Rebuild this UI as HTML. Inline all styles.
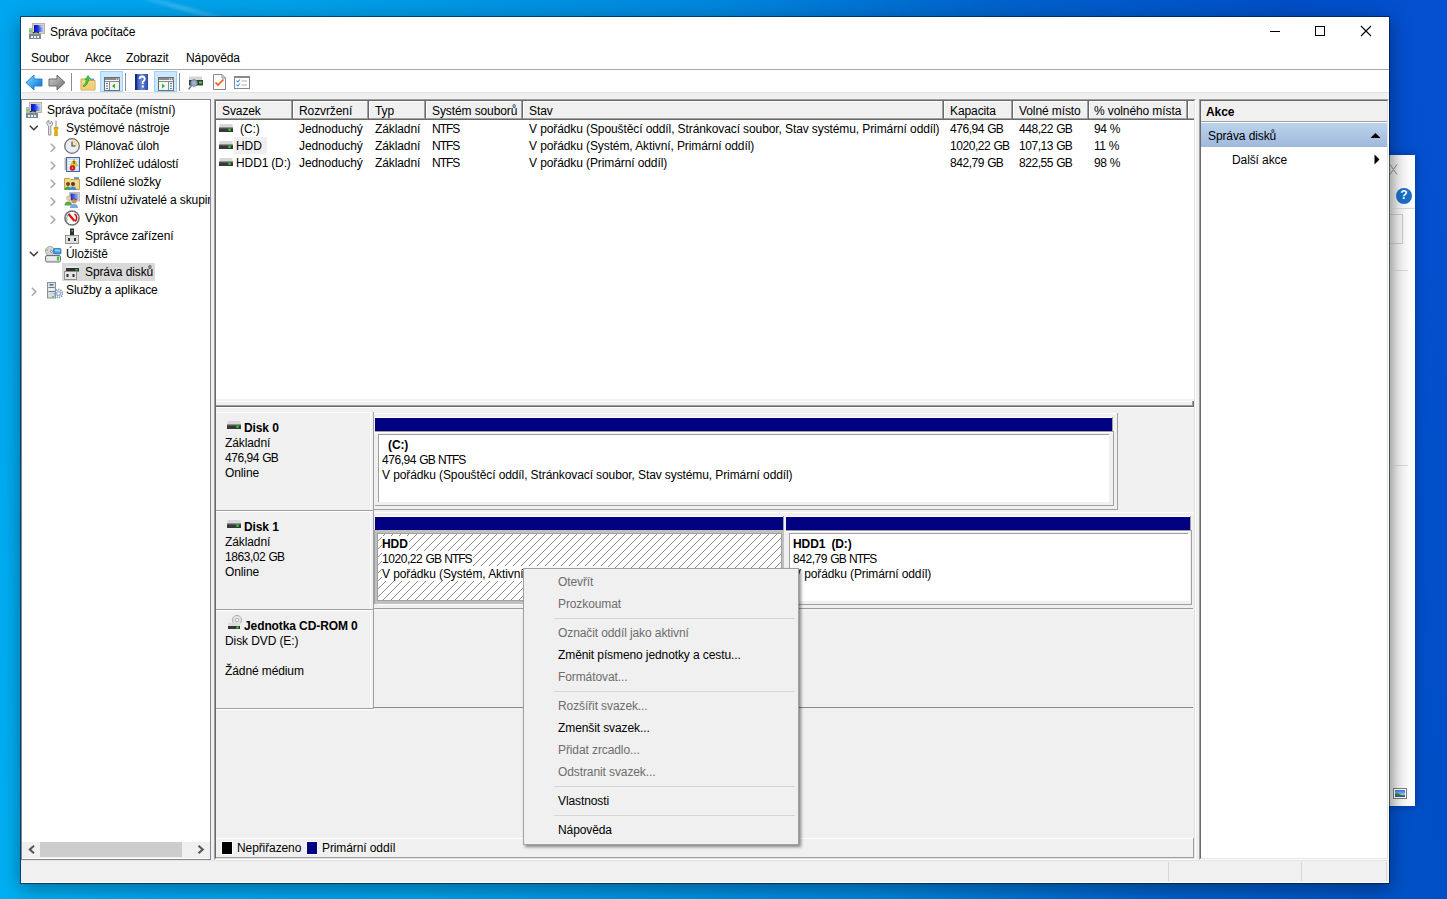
<!DOCTYPE html>
<html><head><meta charset="utf-8">
<style>
*{box-sizing:border-box;margin:0;padding:0}
html,body{width:1447px;height:899px;overflow:hidden}
body{position:relative;font-family:"Liberation Sans",sans-serif;font-size:12px;color:#000;
background:linear-gradient(80deg,#00b0f2 0px,#00a6f0 160px,#00a0e8 443px,#0086dc 860px,#0062cc 1137px,#004ec6 1430px,#0550d2 1581px)}
.a{position:absolute}
.t{position:absolute;white-space:nowrap;line-height:17px;height:17px;font-size:12px;letter-spacing:-0.1px}
.b{font-weight:bold}
.n{letter-spacing:-0.45px}
.gb{letter-spacing:-0.9px}
.nt{letter-spacing:-1px}
.dis{color:#6d6d6d}
svg{position:absolute;overflow:visible}
</style></head><body>
<!-- desktop shading -->


<div class="a" style="left:110px;top:-14px;width:150px;height:5px;background:linear-gradient(90deg,rgba(255,255,255,0),rgba(170,225,255,0.28),rgba(255,255,255,0));transform:rotate(15deg);transform-origin:0 0;filter:blur(1.2px)"></div>
<!-- background window (behind) -->
<div class="a" style="left:1300px;top:155px;width:115px;height:651px;background:#fff;box-shadow:0 0 8px rgba(0,0,40,0.35)">
  <div class="a" style="left:89px;top:0;width:26px;height:651px;background:linear-gradient(90deg,#d4d4d4,#f2f2f2 40%,#fdfdfd 80%)"></div>
  <svg style="left:90px;top:9px" width="8" height="11"><path d="M0 0.5 L7 10.5 M7 0.5 L0 10.5" stroke="#8a8a8a" stroke-width="1"/></svg>
  <div class="a" style="left:96px;top:33px;width:16px;height:16px;border-radius:50%;background:#1a6fc4"></div>
  <div class="a" style="left:96px;top:32px;width:16px;height:16px;color:#fff;font-weight:bold;font-size:12px;text-align:center;line-height:17px">?</div>
  <div class="a" style="left:90px;top:53px;width:25px;height:1px;background:#dadada"></div>
  <div class="a" style="left:80px;top:59px;width:23px;height:30px;border:1px solid #c8c8c8"></div>
  <div class="a" style="left:90px;top:115px;width:18px;height:1px;background:#d8d8d8"></div>
  <div class="a" style="left:90px;top:310px;width:18px;height:1px;background:#d8d8d8"></div>
  <svg style="left:93px;top:633px" width="14" height="11"><rect x="0.5" y="0.5" width="13" height="10" fill="#fff" stroke="#7a7a7a"/>
<defs><linearGradient id="sky" x1="0" y1="0" x2="0" y2="1"><stop offset="0" stop-color="#2a78e0"/><stop offset="1" stop-color="#d8ecf8"/></linearGradient></defs>
<rect x="2" y="2" width="10" height="7" fill="url(#sky)"/><path d="M2 5.5 Q5 4.5 7 6.5 Q9 7.5 12 7 L12 9 L2 9 Z" fill="#3a7a3a"/><rect x="2" y="8" width="10" height="1" fill="#2a5aa0"/></svg>
</div>

<!-- main window -->
<div class="a" id="win" style="left:20px;top:16px;width:1370px;height:868px;background:#f0f0f0;background-clip:padding-box;border:1px solid rgba(0,18,36,0.58);box-shadow:0 5px 18px rgba(0,0,0,0.36)"></div>
<div class="a" style="left:21px;top:17px;width:1368px;height:75px;background:#fff"></div>
<div class="a" style="left:21px;top:69px;width:1368px;height:1px;background:#a9a9a9"></div>
<div class="a" style="left:21px;top:92px;width:1368px;height:1px;background:#e3e3e3"></div>

<!-- title -->
<div class="t" style="left:50px;top:24px">Správa počítače</div>
<!-- window controls -->
<div class="a" style="left:1270px;top:31px;width:10px;height:1px;background:#000"></div>
<div class="a" style="left:1315px;top:26px;width:10px;height:10px;border:1px solid #000"></div>
<svg style="left:1361px;top:26px" width="10" height="10"><path d="M0 0 L10 10 M10 0 L0 10" stroke="#000" stroke-width="1.1"/></svg>

<!-- menu -->
<div class="t" style="left:31px;top:50px">Soubor</div>
<div class="t" style="left:85px;top:50px">Akce</div>
<div class="t" style="left:126px;top:50px">Zobrazit</div>
<div class="t" style="left:186px;top:50px">Nápověda</div>


<svg width="0" height="0" style="left:0;top:0"><defs><linearGradient id="scr2" x1="0" y1="0" x2="1" y2="0"><stop offset="0" stop-color="#0010c8"/><stop offset="0.45" stop-color="#2038e0"/><stop offset="1" stop-color="#b0c4f8"/></linearGradient></defs></svg>
<!-- title icon -->
<svg style="left:29px;top:23px" width="16" height="16">
 <rect x="3.5" y="0.5" width="12" height="10" fill="#d8d4c8" stroke="#b8b4a8"/>
 <rect x="5" y="2" width="9" height="7" fill="url(#scr2)"/><path d="M9 2.5 L13.5 2.5 L13.5 5 Z" fill="#e0e8ff" fill-opacity="0.6"/>
 <rect x="0" y="5" width="3" height="6" fill="#bbb"/><rect x="0.5" y="7" width="2" height="2" fill="#4de04d"/>
 <path d="M4 10 Q7 8 10 10" stroke="#222" stroke-width="1.2" fill="none"/>
 <rect x="0" y="11" width="12" height="5" fill="#7a8a94"/><rect x="2" y="13" width="2" height="2" fill="#eee"/><rect x="5" y="13" width="2" height="2" fill="#eee"/><rect x="8" y="13" width="2" height="2" fill="#eee"/>
</svg>

<!-- toolbar -->
<svg style="left:25px;top:74px" width="18" height="17">
 <defs><linearGradient id="gb" x1="0" y1="0" x2="1" y2="1"><stop offset="0" stop-color="#8ad8ff"/><stop offset="0.5" stop-color="#3aa8f0"/><stop offset="1" stop-color="#0060c0"/></linearGradient></defs>
 <path d="M1 8.5 L9 1 L9 5 L17 5 L17 12 L9 12 L9 16 Z" fill="url(#gb)" stroke="#2f82d0" stroke-width="1" stroke-linejoin="round"/>
</svg>
<svg style="left:48px;top:74px" width="18" height="17">
 <defs><linearGradient id="gg" x1="0" y1="0" x2="1" y2="1"><stop offset="0" stop-color="#d0d0d0"/><stop offset="0.5" stop-color="#a0a0a0"/><stop offset="1" stop-color="#686868"/></linearGradient></defs>
 <path d="M17 8.5 L9 1 L9 5 L1 5 L1 12 L9 12 L9 16 Z" fill="url(#gg)" stroke="#6a6a6a" stroke-width="1" stroke-linejoin="round"/>
</svg>
<div class="a" style="left:71px;top:73px;width:1px;height:18px;background:#8e8e8e"></div>
<svg style="left:80px;top:75px" width="16" height="16">
 <path d="M1 4 L6 4 L7 5.5 L15 5.5 L15 15 L1 15 Z" fill="#f6d98a" stroke="#c9a352" stroke-width="1"/>
 <rect x="1.5" y="8" width="13" height="6.5" fill="#f2cf72"/>
 <path d="M3 11 Q6 9 6.5 4.5 L5 5 L8 0.5 L10.5 4 L9 4 Q8.5 9 4 12 Z" fill="#3cc83c" stroke="#2a9a2a" stroke-width="0.6"/>
 <rect x="10" y="3.5" width="4" height="1.5" fill="#5aa0e0"/>
</svg>
<div class="a" style="left:100px;top:71px;width:23px;height:21px;background:#cce8ff;border:1px solid #99d1ff"></div>
<svg style="left:104px;top:77px" width="17" height="14">
 <rect x="0.5" y="0.5" width="15" height="13" fill="#f4f4f4" stroke="#6e6e6e"/>
 <rect x="1" y="1" width="15" height="2" fill="#8a8a8a"/><rect x="12" y="1.5" width="1" height="1" fill="#fff"/><rect x="14" y="1.5" width="1" height="1" fill="#fff"/>
 <line x1="1" y1="4.5" x2="15" y2="4.5" stroke="#8a8a8a"/>
 <line x1="5.5" y1="5" x2="5.5" y2="13" stroke="#8a8a8a"/>
 <rect x="2" y="6" width="2" height="1" fill="#3a7bd0"/><rect x="2" y="8.5" width="2" height="1" fill="#3a7bd0"/><rect x="2" y="11" width="2" height="1" fill="#3a7bd0"/>
 <path d="M8 9 L11 6.5 L11 11.5 Z" fill="#2cb52c"/>
</svg>
<div class="a" style="left:125px;top:73px;width:1px;height:18px;background:#8e8e8e"></div>
<svg style="left:135px;top:74px" width="14" height="16">
 <defs><linearGradient id="hb" x1="0" y1="0" x2="1" y2="0"><stop offset="0" stop-color="#1d3a9c"/><stop offset="0.5" stop-color="#6a86d8"/><stop offset="1" stop-color="#2848b0"/></linearGradient></defs>
 <rect x="0" y="0" width="13" height="16" fill="url(#hb)"/><rect x="0" y="0" width="2" height="16" fill="#142c80"/>
 <path d="M4.5 5 Q4.5 2.5 7 2.5 Q9.8 2.5 9.8 5 Q9.8 6.8 7.8 7.8 L7.8 10" stroke="#fff" stroke-width="1.8" fill="none"/>
 <rect x="6.9" y="11.5" width="1.9" height="2" fill="#fff"/>
</svg>
<div class="a" style="left:154px;top:71px;width:23px;height:21px;background:#cce8ff;border:1px solid #99d1ff"></div>
<svg style="left:158px;top:77px" width="17" height="14">
 <rect x="0.5" y="0.5" width="15" height="13" fill="#f4f4f4" stroke="#6e6e6e"/>
 <rect x="1" y="1" width="15" height="2" fill="#8a8a8a"/><rect x="11" y="1.5" width="1" height="1" fill="#fff"/><rect x="13" y="1.5" width="1" height="1" fill="#fff"/>
 <line x1="1" y1="4.5" x2="15" y2="4.5" stroke="#8a8a8a"/>
 <line x1="10.5" y1="5" x2="10.5" y2="13" stroke="#8a8a8a"/>
 <rect x="12" y="6" width="2" height="1" fill="#3a7bd0"/><rect x="12" y="8.5" width="2" height="1" fill="#3a7bd0"/><rect x="12" y="11" width="2" height="1" fill="#3a7bd0"/>
 <path d="M4 6.5 L7 9 L4 11.5 Z" fill="#2cb52c"/>
</svg>
<div class="a" style="left:179px;top:73px;width:1px;height:18px;background:#8e8e8e"></div>
<svg style="left:188px;top:76px" width="16" height="15">
 <rect x="1" y="0.5" width="13" height="4" fill="#d4d4d4"/>
 <rect x="1" y="4" width="14" height="5" fill="#3c3c3c"/><rect x="11" y="5.5" width="3" height="2" fill="#30e030"/>
 <rect x="1" y="9" width="14" height="1" fill="#a8a8a8"/>
 <circle cx="6" cy="7" r="3.3" fill="#a8c8e0" fill-opacity="0.85" stroke="#6a7a8a" stroke-width="1"/>
 <line x1="3.5" y1="9.5" x2="0.5" y2="13.5" stroke="#6a7a8a" stroke-width="1.4"/>
</svg>
<svg style="left:213px;top:74px" width="13" height="16">
 <path d="M0.5 0.5 L9 0.5 L12.5 4 L12.5 15.5 L0.5 15.5 Z" fill="#fafafa" stroke="#8a8a8a"/>
 <path d="M9 0.5 L9 4 L12.5 4" fill="none" stroke="#8a8a8a"/>
 <path d="M2.5 8.5 L5 11 L10.5 5.5" stroke="#f05a1a" stroke-width="1.6" fill="none"/>
</svg>
<svg style="left:234px;top:76px" width="17" height="13">
 <rect x="0.5" y="0.5" width="15" height="12" fill="#fff" stroke="#8a8a8a"/>
 <rect x="0.5" y="0.5" width="15" height="1.5" fill="#8a8a8a"/>
 <path d="M2.5 4.5 L3.8 6 L6 3.5" stroke="#3a8ae0" stroke-width="1.1" fill="none"/>
 <path d="M2.5 8.5 L3.8 10 L6 7.5" stroke="#3a8ae0" stroke-width="1.1" fill="none"/>
 <line x1="7.5" y1="5" x2="13" y2="5" stroke="#b0b0b0"/><line x1="7.5" y1="9" x2="13" y2="9" stroke="#b0b0b0"/>
</svg>

<!-- panes -->
<!-- tree pane -->
<div class="a" style="left:21px;top:99px;width:190px;height:761px;background:#fff;border:1px solid #828790"></div>
<div class="a" style="left:22px;top:100px;width:188px;height:742px;overflow:hidden">
 <div class="a" style="left:40px;top:163px;width:93px;height:18px;background:#d9d9d9"></div>
 <div class="t" style="left:25px;top:2px">Správa počítače (místní)</div>
 <div class="t" style="left:44px;top:20px">Systémové nástroje</div>
 <div class="t" style="left:63px;top:38px">Plánovač úloh</div>
 <div class="t" style="left:63px;top:56px">Prohlížeč událostí</div>
 <div class="t" style="left:63px;top:74px">Sdílené složky</div>
 <div class="t" style="left:63px;top:92px">Místní uživatelé a skupiny</div>
 <div class="t" style="left:63px;top:110px">Výkon</div>
 <div class="t" style="left:63px;top:128px">Správce zařízení</div>
 <div class="t" style="left:44px;top:146px">Úložiště</div>
 <div class="t" style="left:63px;top:164px">Správa disků</div>
 <div class="t" style="left:44px;top:182px">Služby a aplikace</div>
</div>
<!-- tree chevrons -->
<svg style="left:29px;top:125px" width="10" height="7"><path d="M0.8 0.8 L4.8 4.8 L8.8 0.8" stroke="#3c3c3c" stroke-width="1.5" fill="none"/></svg>
<svg style="left:29px;top:251px" width="10" height="7"><path d="M0.8 0.8 L4.8 4.8 L8.8 0.8" stroke="#3c3c3c" stroke-width="1.5" fill="none"/></svg>
<svg style="left:50px;top:143px" width="7" height="10"><path d="M0.8 0.8 L4.8 4.8 L0.8 8.8" stroke="#a6a6a6" stroke-width="1.5" fill="none"/></svg>
<svg style="left:50px;top:161px" width="7" height="10"><path d="M0.8 0.8 L4.8 4.8 L0.8 8.8" stroke="#a6a6a6" stroke-width="1.5" fill="none"/></svg>
<svg style="left:50px;top:179px" width="7" height="10"><path d="M0.8 0.8 L4.8 4.8 L0.8 8.8" stroke="#a6a6a6" stroke-width="1.5" fill="none"/></svg>
<svg style="left:50px;top:197px" width="7" height="10"><path d="M0.8 0.8 L4.8 4.8 L0.8 8.8" stroke="#a6a6a6" stroke-width="1.5" fill="none"/></svg>
<svg style="left:50px;top:215px" width="7" height="10"><path d="M0.8 0.8 L4.8 4.8 L0.8 8.8" stroke="#a6a6a6" stroke-width="1.5" fill="none"/></svg>
<svg style="left:31px;top:287px" width="7" height="10"><path d="M0.8 0.8 L4.8 4.8 L0.8 8.8" stroke="#a6a6a6" stroke-width="1.5" fill="none"/></svg>
<!-- tree icons -->
<svg style="left:26px;top:102px" width="16" height="16">
 <rect x="3.5" y="0.5" width="12" height="10" fill="#d8d4c8" stroke="#b8b4a8"/>
 <rect x="5" y="2" width="9" height="7" fill="url(#scr2)"/><path d="M9 2.5 L13.5 2.5 L13.5 5 Z" fill="#e0e8ff" fill-opacity="0.6"/>
 <rect x="0" y="5" width="3" height="6" fill="#bbb"/><rect x="0.5" y="7" width="2" height="2" fill="#4de04d"/>
 <path d="M4 10 Q7 8 10 10" stroke="#222" stroke-width="1.2" fill="none"/>
 <rect x="0" y="11" width="12" height="5" fill="#7a8a94"/><rect x="2" y="13" width="2" height="2" fill="#eee"/><rect x="5" y="13" width="2" height="2" fill="#eee"/><rect x="8" y="13" width="2" height="2" fill="#eee"/>
</svg>
<svg style="left:46px;top:120px" width="14" height="16">
 <path d="M2.5 15 L2.5 6 Q0.5 5 0.8 2.5 Q1.2 0.5 3 0.5 L3 3 L4.5 3.5 L5.5 1 Q7 2.5 6.5 4.5 Q6 6 4.8 6 L4.8 15 Z" fill="#e4e4e4" stroke="#8c8c8c" stroke-width="0.9"/>
 <rect x="9.5" y="0.5" width="1" height="7" fill="#8c8c8c"/>
 <path d="M8 7.5 L12 7.5 L12 9 L11 9.5 L11.5 15.5 L8.5 15.5 L9 9.5 L8 9 Z" fill="#f0b800" stroke="#c08800" stroke-width="0.7"/>
</svg>
<svg style="left:64px;top:138px" width="16" height="16">
 <circle cx="8" cy="8" r="7.3" fill="#e8eef4" stroke="#707070" stroke-width="1.3"/>
 <path d="M8 8 L8 1.5 A6.5 6.5 0 0 1 14.5 8 Z" fill="#f5deaa"/>
 <path d="M8 3.5 L8 8 L11.5 8" stroke="#404040" stroke-width="1.1" fill="none"/>
</svg>
<svg style="left:64px;top:156px" width="16" height="16">
 <rect x="2.5" y="1.5" width="13" height="14" fill="#cfe0f4" stroke="#4a64a8"/>
 <path d="M4 4.5 H14 M4 7 H14 M4 9.5 H14 M4 12 H14" stroke="#fff" stroke-width="1"/>
 <path d="M0.5 3 H3 M0.5 5 H3 M0.5 7 H3 M0.5 9 H3 M0.5 11 H3 M0.5 13 H3" stroke="#707070" stroke-width="1"/>
 <path d="M6.5 9.5 L10 3 L13.5 9.5 Z" fill="#f4d41a" stroke="#b89a00" stroke-width="0.6"/>
 <rect x="9.5" y="5" width="1.1" height="3" fill="#303030"/>
 <circle cx="8.5" cy="12" r="2.8" fill="#d42020"/><rect x="8" y="11.5" width="1" height="1" fill="#fff"/>
</svg>
<svg style="left:64px;top:176px" width="16" height="14">
 <path d="M0.5 2.5 L5.5 2.5 L6.5 3.5 L15.5 3.5 L15.5 13.5 L0.5 13.5 Z" fill="#f4d88a" stroke="#c8a050"/>
 <rect x="10" y="1" width="5" height="2" fill="#6aa0d8"/>
 <circle cx="4" cy="8" r="2" fill="#6a4a30"/><path d="M0.5 14 Q1 10.5 4 10.5 Q7 10.5 7.5 14 Z" fill="#3aaa5a"/>
 <circle cx="9" cy="8" r="2" fill="#5a3a20"/><path d="M5.5 14 Q6 10.5 9 10.5 Q12 10.5 12.5 14 Z" fill="#4a8ad0"/>
</svg>
<svg style="left:64px;top:192px" width="16" height="16">
 <rect x="5.5" y="0.5" width="10" height="8.5" fill="#d8d4c8" stroke="#c0bcb0"/>
 <defs><linearGradient id="scr" x1="0" y1="0" x2="1" y2="0"><stop offset="0" stop-color="#1020d0"/><stop offset="1" stop-color="#a8c0f8"/></linearGradient></defs>
 <rect x="6.5" y="1.5" width="8" height="6.5" fill="url(#scr)"/>
 <circle cx="4.5" cy="6.5" r="2.4" fill="#e8c8a0"/><path d="M2 5.5 Q4.5 2.5 7 5.5 L7 4.8 Q4.5 2.8 2 4.8 Z" fill="#c8b070"/>
 <path d="M0.5 13.5 Q0.5 9.5 4.5 9.5 Q8 9.5 8 13.5 Z" fill="#5aa848"/>
 <circle cx="10" cy="9" r="2.5" fill="#c89060"/><path d="M7.4 8.5 Q10 5.5 12.6 8.5 L12.6 7.6 Q10 5.6 7.4 7.6 Z" fill="#3a2a20"/>
 <path d="M6 16 Q6 12 10 12 Q14 12 14 16 Z" fill="#78a8e0"/>
</svg>
<svg style="left:64px;top:210px" width="16" height="16">
 <circle cx="8" cy="8" r="7.1" fill="#fbfbf8" stroke="#6e6e6e" stroke-width="1.5"/>
 <path d="M3.2 10.5 A5 5 0 0 1 6 3.5" stroke="#3a8a6a" stroke-width="1.3" fill="none" stroke-dasharray="1.2 0.8"/>
 <path d="M10.5 3.8 A5 5 0 0 1 11.2 11.5" stroke="#dd1010" stroke-width="1.6" fill="none"/>
 <path d="M4.5 4 L10.5 11" stroke="#e01010" stroke-width="2.2"/>
</svg>
<svg style="left:65px;top:228px" width="14" height="16">
 <rect x="5" y="0.5" width="4" height="7" fill="#303030"/><rect x="6.5" y="2" width="1.5" height="1.5" fill="#30e030"/>
 <rect x="0.5" y="7.5" width="13" height="8" fill="#e0e0e0" stroke="#909090"/>
 <rect x="3" y="10" width="2" height="3" fill="#303030"/><rect x="9" y="10" width="2" height="3" fill="#303030"/>
</svg>
<svg style="left:45px;top:246px" width="17" height="17">
 <circle cx="5" cy="5" r="4.6" fill="#d4d4d4" stroke="#a0a0a0" stroke-width="0.8"/><circle cx="2" cy="4" r="1" fill="#6ad84a"/>
 <circle cx="6.5" cy="5.5" r="1.1" fill="#fff" stroke="#606060" stroke-width="0.6"/>
 <rect x="8.5" y="2.5" width="7.5" height="5.5" rx="1" fill="#3a9ad8" stroke="#2a78b8" stroke-width="0.8"/><rect x="10" y="3.5" width="5" height="2" fill="#8ad0f4"/>
 <rect x="0.5" y="9.5" width="15" height="6.5" rx="1.5" fill="#dcdce4" stroke="#707078"/>
 <rect x="2.5" y="11" width="9" height="3" fill="#ececf4"/>
 <rect x="12" y="10.5" width="2" height="4" fill="#30d020"/>
</svg>
<svg style="left:64px;top:265px" width="16" height="15">
 <rect x="2" y="1" width="13" height="3" fill="#e8e8e8"/>
 <rect x="2" y="3" width="13" height="3.5" fill="#303030"/><rect x="11.5" y="4" width="2" height="1.5" fill="#30e030"/>
 <rect x="0.5" y="6.5" width="12" height="8" fill="#e6e6e6" stroke="#909090"/>
 <rect x="2.5" y="9" width="2" height="3" fill="#303030"/><rect x="8.5" y="9" width="2" height="3" fill="#303030"/>
</svg>
<svg style="left:47px;top:282px" width="16" height="16">
 <rect x="0.5" y="0.5" width="8" height="15.5" fill="#d8dce0" stroke="#8a9098"/>
 <rect x="1.5" y="2" width="6" height="2.5" fill="#e8f4f8"/><rect x="2.5" y="2.3" width="4" height="1.2" fill="#2a4a5a"/>
 <rect x="1.5" y="5" width="6" height="1" fill="#707880"/><rect x="1.5" y="6.5" width="6" height="2" fill="#eef6f8"/><rect x="1.5" y="9" width="6" height="1" fill="#707880"/>
 <rect x="5" y="14" width="2" height="1.3" fill="#50d040"/>
 <circle cx="11.5" cy="11.5" r="3.9" fill="none" stroke="#7a98b8" stroke-width="1.8" stroke-dasharray="1.3 0.9"/>
 <circle cx="11.5" cy="11.5" r="2.6" fill="#9ab4d0"/><circle cx="11.5" cy="11.5" r="1.2" fill="#fff"/>
</svg>
<!-- tree scrollbar -->
<div class="a" style="left:22px;top:842px;width:188px;height:16px;background:#f0f0f0"></div>
<div class="a" style="left:40px;top:842px;width:142px;height:15px;background:#cdcdcd"></div>
<svg style="left:28px;top:845px" width="8" height="9"><path d="M6 0.8 L1.8 4.5 L6 8.2" stroke="#555" stroke-width="2.1" fill="none"/></svg>
<svg style="left:197px;top:845px" width="8" height="9"><path d="M1.5 0.8 L5.7 4.5 L1.5 8.2" stroke="#555" stroke-width="2.1" fill="none"/></svg>

<!-- mid pane -->
<div class="a" style="left:214px;top:99px;width:982px;height:761px;background:#fff;border-top:1px solid #a0a0a0;border-left:1px solid #a0a0a0;border-right:1px solid #fff;border-bottom:1px solid #fff"></div>
<div class="a" style="left:215px;top:100px;width:980px;height:759px;border-top:1px solid #696969;border-left:1px solid #696969;border-right:1px solid #e3e3e3;border-bottom:1px solid #e3e3e3"></div>

<!-- list header -->
<div class="a" style="left:216px;top:101px;width:978px;height:19px;background:#f0f0f0"></div>
<div class="a" style="left:216px;top:101px;width:978px;height:1px;background:#fff"></div>
<div class="a" style="left:216px;top:118px;width:978px;height:1px;background:#a0a0a0"></div>
<div class="a" style="left:216px;top:119px;width:978px;height:1px;background:#696969"></div>
<div class="a" style="left:216px;top:101px;width:1px;height:17px;background:#fff"></div>
<div class="a" style="left:293px;top:101px;width:1px;height:17px;background:#fff"></div>
<div class="a" style="left:369px;top:101px;width:1px;height:17px;background:#fff"></div>
<div class="a" style="left:426px;top:101px;width:1px;height:17px;background:#fff"></div>
<div class="a" style="left:523px;top:101px;width:1px;height:17px;background:#fff"></div>
<div class="a" style="left:944px;top:101px;width:1px;height:17px;background:#fff"></div>
<div class="a" style="left:1013px;top:101px;width:1px;height:17px;background:#fff"></div>
<div class="a" style="left:1089px;top:101px;width:1px;height:17px;background:#fff"></div>
<div class="a" style="left:1188px;top:101px;width:1px;height:17px;background:#fff"></div>
<div class="a" style="left:291px;top:101px;width:1px;height:18px;background:#a0a0a0"></div><div class="a" style="left:292px;top:101px;width:1px;height:19px;background:#696969"></div>
<div class="a" style="left:367px;top:101px;width:1px;height:18px;background:#a0a0a0"></div><div class="a" style="left:368px;top:101px;width:1px;height:19px;background:#696969"></div>
<div class="a" style="left:424px;top:101px;width:1px;height:18px;background:#a0a0a0"></div><div class="a" style="left:425px;top:101px;width:1px;height:19px;background:#696969"></div>
<div class="a" style="left:521px;top:101px;width:1px;height:18px;background:#a0a0a0"></div><div class="a" style="left:522px;top:101px;width:1px;height:19px;background:#696969"></div>
<div class="a" style="left:942px;top:101px;width:1px;height:18px;background:#a0a0a0"></div><div class="a" style="left:943px;top:101px;width:1px;height:19px;background:#696969"></div>
<div class="a" style="left:1011px;top:101px;width:1px;height:18px;background:#a0a0a0"></div><div class="a" style="left:1012px;top:101px;width:1px;height:19px;background:#696969"></div>
<div class="a" style="left:1087px;top:101px;width:1px;height:18px;background:#a0a0a0"></div><div class="a" style="left:1088px;top:101px;width:1px;height:19px;background:#696969"></div>
<div class="a" style="left:1186px;top:101px;width:1px;height:18px;background:#a0a0a0"></div><div class="a" style="left:1187px;top:101px;width:1px;height:19px;background:#696969"></div>
<div class="t" style="left:222px;top:103px">Svazek</div>
<div class="t" style="left:299px;top:103px">Rozvržení</div>
<div class="t" style="left:375px;top:103px">Typ</div>
<div class="t" style="left:432px;top:103px">Systém souborů</div>
<div class="t" style="left:529px;top:103px">Stav</div>
<div class="t" style="left:950px;top:103px">Kapacita</div>
<div class="t" style="left:1019px;top:103px">Volné místo</div>
<div class="t" style="left:1094px;top:103px">% volného místa</div>
<div class="a" style="left:234px;top:137px;width:33px;height:17px;background:#efefef"></div>
<svg style="left:219px;top:124px" width="14" height="8"><rect x="0.5" y="0" width="13" height="4" rx="1" fill="#d6d8da"/><rect x="0" y="3.5" width="14" height="4.5" fill="#383838"/><rect x="0" y="3.5" width="14" height="0.8" fill="#9a9a9a"/><circle cx="10.5" cy="5.8" r="1.3" fill="#22dd22"/></svg>
<div class="t" style="left:240px;top:121px">(C:)</div>
<div class="t" style="left:299px;top:121px">Jednoduchý</div>
<div class="t" style="left:375px;top:121px">Základní</div>
<div class="t" style="left:432px;top:121px"><span class="nt">NTFS</span></div>
<div class="t" style="left:529px;top:121px">V pořádku (Spouštěcí oddíl, Stránkovací soubor, Stav systému, Primární oddíl)</div>
<div class="t" style="left:950px;top:121px"><span class="n">476,94</span> <span class="gb">GB</span></div>
<div class="t" style="left:1019px;top:121px"><span class="n">448,22</span> <span class="gb">GB</span></div>
<div class="t" style="left:1094px;top:121px"><span class="n">94</span> %</div>
<svg style="left:219px;top:141px" width="14" height="8"><rect x="0.5" y="0" width="13" height="4" rx="1" fill="#d6d8da"/><rect x="0" y="3.5" width="14" height="4.5" fill="#383838"/><rect x="0" y="3.5" width="14" height="0.8" fill="#9a9a9a"/><circle cx="10.5" cy="5.8" r="1.3" fill="#22dd22"/></svg>
<div class="t" style="left:236px;top:138px">HDD</div>
<div class="t" style="left:299px;top:138px">Jednoduchý</div>
<div class="t" style="left:375px;top:138px">Základní</div>
<div class="t" style="left:432px;top:138px"><span class="nt">NTFS</span></div>
<div class="t" style="left:529px;top:138px">V pořádku (Systém, Aktivní, Primární oddíl)</div>
<div class="t" style="left:950px;top:138px"><span class="n">1020,22</span> <span class="gb">GB</span></div>
<div class="t" style="left:1019px;top:138px"><span class="n">107,13</span> <span class="gb">GB</span></div>
<div class="t" style="left:1094px;top:138px"><span class="n">11</span> %</div>
<svg style="left:219px;top:158px" width="14" height="8"><rect x="0.5" y="0" width="13" height="4" rx="1" fill="#d6d8da"/><rect x="0" y="3.5" width="14" height="4.5" fill="#383838"/><rect x="0" y="3.5" width="14" height="0.8" fill="#9a9a9a"/><circle cx="10.5" cy="5.8" r="1.3" fill="#22dd22"/></svg>
<div class="t" style="left:236px;top:155px">HDD<span class="n">1</span> (D:)</div>
<div class="t" style="left:299px;top:155px">Jednoduchý</div>
<div class="t" style="left:375px;top:155px">Základní</div>
<div class="t" style="left:432px;top:155px"><span class="nt">NTFS</span></div>
<div class="t" style="left:529px;top:155px">V pořádku (Primární oddíl)</div>
<div class="t" style="left:950px;top:155px"><span class="n">842,79</span> <span class="gb">GB</span></div>
<div class="t" style="left:1019px;top:155px"><span class="n">822,55</span> <span class="gb">GB</span></div>
<div class="t" style="left:1094px;top:155px"><span class="n">98</span> %</div>

<!-- graph view -->
<div class="a" style="left:216px;top:399px;width:978px;height:459px;background:#f0f0f0"></div>
<div class="a" style="left:216px;top:401px;width:977px;height:1px;background:#fff"></div>
<div class="a" style="left:216px;top:405px;width:977px;height:1px;background:#a0a0a0"></div>
<div class="a" style="left:216px;top:406px;width:978px;height:1px;background:#696969"></div>
<div class="a" style="left:1192px;top:401px;width:1px;height:5px;background:#a0a0a0"></div>
<div class="a" style="left:1193px;top:401px;width:1px;height:6px;background:#696969"></div>
<div class="a" style="left:216px;top:407px;width:978px;height:1px;background:#fff"></div>
<div class="a" style="left:1194px;top:399px;width:1px;height:459px;background:#e3e3e3"></div>
<div class="a" style="left:216px;top:412px;width:155px;height:1px;background:#fff"></div>
<div class="a" style="left:370px;top:412px;width:1px;height:98px;background:#fff"></div>
<div class="a" style="left:373px;top:412px;width:1px;height:98px;background:#a0a0a0"></div>
<div class="a" style="left:216px;top:510px;width:158px;height:1px;background:#a0a0a0"></div>
<div class="a" style="left:216px;top:511px;width:158px;height:1px;background:#fff"></div>
<div class="a" style="left:216px;top:511px;width:155px;height:1px;background:#fff"></div>
<div class="a" style="left:370px;top:511px;width:1px;height:98px;background:#fff"></div>
<div class="a" style="left:373px;top:511px;width:1px;height:98px;background:#a0a0a0"></div>
<div class="a" style="left:216px;top:609px;width:158px;height:1px;background:#a0a0a0"></div>
<div class="a" style="left:216px;top:610px;width:158px;height:1px;background:#fff"></div>
<div class="a" style="left:216px;top:610px;width:155px;height:1px;background:#fff"></div>
<div class="a" style="left:370px;top:610px;width:1px;height:98px;background:#fff"></div>
<div class="a" style="left:373px;top:610px;width:1px;height:98px;background:#a0a0a0"></div>
<div class="a" style="left:216px;top:708px;width:158px;height:1px;background:#a0a0a0"></div>
<div class="a" style="left:216px;top:709px;width:158px;height:1px;background:#fff"></div>
<div class="a" style="left:374px;top:610px;width:819px;height:1px;background:#f8f8f8"></div>
<div class="a" style="left:374px;top:707px;width:819px;height:1px;background:#8a8a8a"></div>
<div class="a" style="left:374px;top:413px;width:743px;height:1px;background:#fff"></div>
<div class="a" style="left:1117px;top:413px;width:1px;height:97px;background:#a0a0a0"></div>
<div class="a" style="left:374px;top:509px;width:744px;height:1px;background:#a0a0a0"></div>
<div class="a" style="left:375px;top:417px;width:737px;height:1px;background:#fff"></div>
<div class="a" style="left:375px;top:418px;width:737px;height:13px;background:#000080"></div>
<div class="a" style="left:1112px;top:417px;width:1px;height:15px;background:#a0a0a0"></div>
<div class="a" style="left:375px;top:431px;width:738px;height:1px;background:#a0a0a0"></div>
<div class="a" style="left:375px;top:432px;width:738px;height:1px;background:#fff"></div>
<div class="a" style="left:1113px;top:431px;width:1px;height:75px;background:#a0a0a0"></div>
<div class="a" style="left:375px;top:505px;width:739px;height:1px;background:#a0a0a0"></div>
<div class="a" style="left:378px;top:434px;width:731px;height:1px;background:#a0a0a0"></div>
<div class="a" style="left:378px;top:434px;width:1px;height:68px;background:#a0a0a0"></div>
<div class="a" style="left:379px;top:435px;width:730px;height:67px;background:#fff"></div>
<div class="a" style="left:374px;top:512px;width:819px;height:1px;background:#fff"></div>
<div class="a" style="left:374px;top:608px;width:819px;height:1px;background:#a0a0a0"></div>
<div class="a" style="left:375px;top:516px;width:408px;height:1px;background:#fff"></div>
<div class="a" style="left:375px;top:517px;width:408px;height:13px;background:#000080"></div>
<div class="a" style="left:783px;top:516px;width:1px;height:15px;background:#a0a0a0"></div>
<div class="a" style="left:374px;top:530px;width:410px;height:74px;background:#c0c0c0"></div>
<div class="a" style="left:374px;top:530px;width:1px;height:74px;background:#a0a0a0"></div>
<svg style="left:378px;top:534px" width="403" height="66"><defs><pattern id="hatch" patternUnits="userSpaceOnUse" width="8" height="8"><rect x="6" y="0" width="1" height="1" fill="#8c8c8c"/><rect x="5" y="1" width="1" height="1" fill="#8c8c8c"/><rect x="4" y="2" width="1" height="1" fill="#8c8c8c"/><rect x="3" y="3" width="1" height="1" fill="#8c8c8c"/><rect x="2" y="4" width="1" height="1" fill="#8c8c8c"/><rect x="1" y="5" width="1" height="1" fill="#8c8c8c"/><rect x="0" y="6" width="1" height="1" fill="#8c8c8c"/><rect x="7" y="7" width="1" height="1" fill="#8c8c8c"/></pattern></defs><rect x="0" y="0" width="403" height="66" fill="#fff"/><rect x="0" y="0" width="403" height="66" fill="url(#hatch)"/></svg>
<div class="a" style="left:377px;top:533px;width:405px;height:1px;background:#a0a0a0"></div><div class="a" style="left:377px;top:600px;width:405px;height:1px;background:#a0a0a0"></div><div class="a" style="left:377px;top:533px;width:1px;height:68px;background:#a0a0a0"></div><div class="a" style="left:781px;top:533px;width:1px;height:68px;background:#a0a0a0"></div>
<div class="a" style="left:378px;top:604px;width:406px;height:1px;background:#fff"></div>
<div class="a" style="left:786px;top:516px;width:404px;height:1px;background:#fff"></div>
<div class="a" style="left:786px;top:517px;width:404px;height:13px;background:#000080"></div>
<div class="a" style="left:1190px;top:516px;width:1px;height:15px;background:#a0a0a0"></div>
<div class="a" style="left:786px;top:530px;width:405px;height:1px;background:#a0a0a0"></div>
<div class="a" style="left:786px;top:531px;width:405px;height:1px;background:#fff"></div>
<div class="a" style="left:1191px;top:530px;width:1px;height:75px;background:#a0a0a0"></div>
<div class="a" style="left:786px;top:604px;width:406px;height:1px;background:#a0a0a0"></div>
<div class="a" style="left:789px;top:533px;width:399px;height:1px;background:#a0a0a0"></div>
<div class="a" style="left:789px;top:533px;width:1px;height:68px;background:#a0a0a0"></div>
<div class="a" style="left:790px;top:534px;width:400px;height:67px;background:#fff"></div>
<svg style="left:227px;top:421px" width="14" height="8"><rect x="0.5" y="0" width="13" height="4" rx="1" fill="#d6d8da"/><rect x="0" y="3.5" width="14" height="4.5" fill="#383838"/><rect x="0" y="3.5" width="14" height="0.8" fill="#9a9a9a"/><circle cx="10.5" cy="5.8" r="1.3" fill="#22dd22"/></svg>
<div class="t b" style="left:244px;top:420px;">Disk <span class="n">0</span></div>
<div class="t" style="left:225px;top:435px;">Základní</div>
<div class="t" style="left:225px;top:450px;"><span class="n">476,94</span> <span class="gb">GB</span></div>
<div class="t" style="left:225px;top:465px;">Online</div>
<svg style="left:227px;top:520px" width="14" height="8"><rect x="0.5" y="0" width="13" height="4" rx="1" fill="#d6d8da"/><rect x="0" y="3.5" width="14" height="4.5" fill="#383838"/><rect x="0" y="3.5" width="14" height="0.8" fill="#9a9a9a"/><circle cx="10.5" cy="5.8" r="1.3" fill="#22dd22"/></svg>
<div class="t b" style="left:244px;top:519px;">Disk <span class="n">1</span></div>
<div class="t" style="left:225px;top:534px;">Základní</div>
<div class="t" style="left:225px;top:549px;"><span class="n">1863,02</span> <span class="gb">GB</span></div>
<div class="t" style="left:225px;top:564px;">Online</div>
<svg style="left:227px;top:613px" width="16" height="17"><circle cx="10" cy="7" r="4.6" fill="#e2e6e6" stroke="#a8a8a8" stroke-width="0.9"/><circle cx="10" cy="7" r="1.7" fill="#fff" stroke="#9a9a9a" stroke-width="0.8"/><rect x="1" y="9.5" width="12" height="3.6" fill="#dcdee0"/><rect x="1" y="13" width="12" height="3" fill="#363636"/><circle cx="10.5" cy="14.5" r="1.2" fill="#22dd22"/></svg>
<div class="t b" style="left:244px;top:618px;">Jednotka CD-ROM <span class="n">0</span></div>
<div class="t" style="left:225px;top:633px;">Disk DVD (E:)</div>
<div class="t" style="left:225px;top:663px;">Žádné médium</div>
<div class="t b" style="left:388px;top:437px;">(C:)</div>
<div class="t" style="left:382px;top:452px;"><span class="n">476,94</span> <span class="gb">GB</span> <span class="nt">NTFS</span></div>
<div class="t" style="left:382px;top:467px;">V pořádku (Spouštěcí oddíl, Stránkovací soubor, Stav systému, Primární oddíl)</div>
<div class="t b" style="left:382px;top:536px;background:#fff;height:15px;line-height:17px;overflow:hidden;padding-right:1px">HDD</div>
<div class="t" style="left:382px;top:551px;background:#fff;height:15px;line-height:17px;overflow:hidden;padding-right:1px"><span class="n">1020,22</span> <span class="gb">GB</span> <span class="nt">NTFS</span></div>
<div class="t" style="left:382px;top:566px;background:#fff;height:15px;line-height:17px;overflow:hidden;padding-right:1px">V pořádku (Systém, Aktivní, Primární oddíl)</div>
<div class="t b" style="left:793px;top:536px;">HDD<span class="n">1</span>&nbsp; (D:)</div>
<div class="t" style="left:793px;top:551px;"><span class="n">842,79</span> <span class="gb">GB</span> <span class="nt">NTFS</span></div>
<div class="t" style="left:793px;top:566px;">V pořádku (Primární oddíl)</div>
<div class="a" style="left:216px;top:838px;width:977px;height:1px;background:#fff"></div>
<div class="a" style="left:1193px;top:838px;width:1px;height:20px;background:#a0a0a0"></div>
<div class="a" style="left:216px;top:857px;width:978px;height:1px;background:#a0a0a0"></div>
<div class="a" style="left:221px;top:841px;width:12px;height:14px;background:#fff"></div>
<div class="a" style="left:222px;top:842px;width:10px;height:12px;background:#000"></div>
<div class="t" style="left:237px;top:840px;">Nepřiřazeno</div>
<div class="a" style="left:306px;top:841px;width:12px;height:14px;background:#fff"></div>
<div class="a" style="left:307px;top:842px;width:10px;height:12px;background:#000080"></div>
<div class="t" style="left:322px;top:840px;">Primární oddíl</div>
<!-- akce pane -->
<div class="a" style="left:1199px;top:99px;width:190px;height:761px;background:#fff;border-top:1px solid #a0a0a0;border-left:1px solid #a0a0a0;border-right:1px solid #fff;border-bottom:1px solid #fff"></div>
<div class="a" style="left:1200px;top:100px;width:188px;height:759px;border-top:1px solid #696969;border-left:1px solid #696969;border-right:1px solid #e3e3e3;border-bottom:1px solid #e3e3e3"></div>
<div class="a" style="left:1201px;top:101px;width:186px;height:20px;background:#f0f0f0"></div>
<div class="a" style="left:1201px;top:121px;width:186px;height:1px;background:#a0a0a0"></div>
<div class="t b" style="left:1206px;top:104px;">Akce</div>
<div class="a" style="left:1201px;top:123px;width:186px;height:24px;background:linear-gradient(180deg,#bcd3ec,#9fb9dc)"></div>
<div class="t" style="left:1208px;top:128px;">Správa disků</div>
<svg style="left:1370px;top:132px" width="11" height="7"><path d="M0.5 6 L5.5 1 L10.5 6 Z" fill="#000"/></svg>
<div class="t" style="left:1232px;top:152px;">Další akce</div>
<svg style="left:1374px;top:154px" width="6" height="11"><path d="M0.5 0.5 L5.5 5.5 L0.5 10.5 Z" fill="#000"/></svg>
<!-- status -->
<div class="a" style="left:21px;top:860px;width:1368px;height:23px;background:#f0f0f0"></div>
<div class="a" style="left:21px;top:860px;width:1368px;height:1px;background:#e3e3e3"></div>
<div class="a" style="left:21px;top:882px;width:1368px;height:1px;background:#fff"></div>
<div class="a" style="left:1168px;top:862px;width:1px;height:19px;background:#d5d5d5"></div>
<div class="a" style="left:1301px;top:862px;width:1px;height:19px;background:#d5d5d5"></div>
<div class="a" style="left:1386px;top:862px;width:1px;height:19px;background:#d5d5d5"></div>
<!-- context menu -->
<div class="a" style="left:523px;top:568px;width:276px;height:277px;background:#f0f0f0;border:1px solid #a0a0a0;box-shadow:2px 2px 3px rgba(0,0,0,0.45)"></div>
<div class="t dis" style="left:558px;top:574px;">Otevřít</div>
<div class="t dis" style="left:558px;top:596px;">Prozkoumat</div>
<div class="t dis" style="left:558px;top:625px;">Označit oddíl jako aktivní</div>
<div class="t" style="left:558px;top:647px;">Změnit písmeno jednotky a cestu...</div>
<div class="t dis" style="left:558px;top:669px;">Formátovat...</div>
<div class="t dis" style="left:558px;top:698px;">Rozšířit svazek...</div>
<div class="t" style="left:558px;top:720px;">Zmenšit svazek...</div>
<div class="t dis" style="left:558px;top:742px;">Přidat zrcadlo...</div>
<div class="t dis" style="left:558px;top:764px;">Odstranit svazek...</div>
<div class="t" style="left:558px;top:793px;">Vlastnosti</div>
<div class="t" style="left:558px;top:822px;">Nápověda</div>
<div class="a" style="left:554px;top:618px;width:241px;height:1px;background:#d7d7d7"></div>
<div class="a" style="left:554px;top:691px;width:241px;height:1px;background:#d7d7d7"></div>
<div class="a" style="left:554px;top:786px;width:241px;height:1px;background:#d7d7d7"></div>
<div class="a" style="left:554px;top:815px;width:241px;height:1px;background:#d7d7d7"></div>

</body></html>
